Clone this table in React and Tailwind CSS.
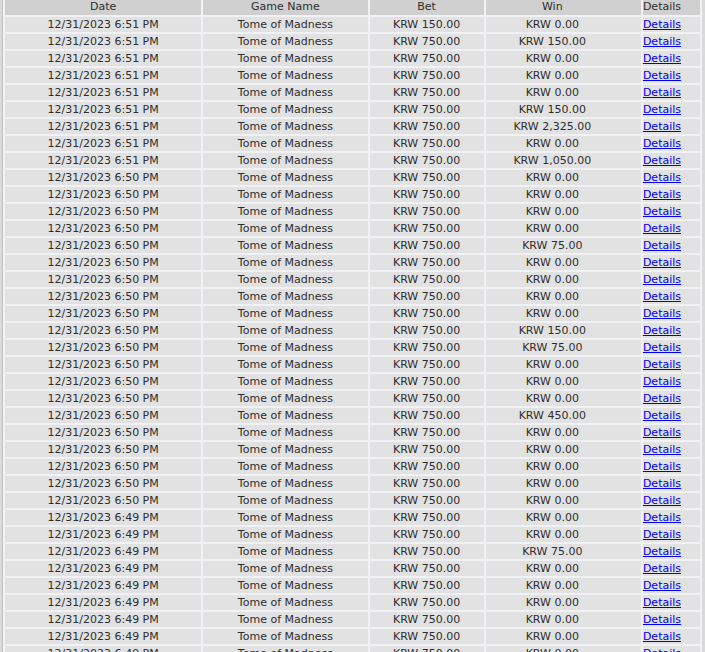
import React from 'react';

// history rows: [time, bet, win]
const rows = [
  ['6:51', '150.00', '0.00'],
  ['6:51', '750.00', '150.00'],
  ['6:51', '750.00', '0.00'],
  ['6:51', '750.00', '0.00'],
  ['6:51', '750.00', '0.00'],
  ['6:51', '750.00', '150.00'],
  ['6:51', '750.00', '2,325.00'],
  ['6:51', '750.00', '0.00'],
  ['6:51', '750.00', '1,050.00'],
  ['6:50', '750.00', '0.00'],
  ['6:50', '750.00', '0.00'],
  ['6:50', '750.00', '0.00'],
  ['6:50', '750.00', '0.00'],
  ['6:50', '750.00', '75.00'],
  ['6:50', '750.00', '0.00'],
  ['6:50', '750.00', '0.00'],
  ['6:50', '750.00', '0.00'],
  ['6:50', '750.00', '0.00'],
  ['6:50', '750.00', '150.00'],
  ['6:50', '750.00', '75.00'],
  ['6:50', '750.00', '0.00'],
  ['6:50', '750.00', '0.00'],
  ['6:50', '750.00', '0.00'],
  ['6:50', '750.00', '450.00'],
  ['6:50', '750.00', '0.00'],
  ['6:50', '750.00', '0.00'],
  ['6:50', '750.00', '0.00'],
  ['6:50', '750.00', '0.00'],
  ['6:50', '750.00', '0.00'],
  ['6:49', '750.00', '0.00'],
  ['6:49', '750.00', '0.00'],
  ['6:49', '750.00', '75.00'],
  ['6:49', '750.00', '0.00'],
  ['6:49', '750.00', '0.00'],
  ['6:49', '750.00', '0.00'],
  ['6:49', '750.00', '0.00'],
  ['6:49', '750.00', '0.00'],
  ['6:49', '750.00', '0.00'],
];

const cell = 'h-[15px] p-0 text-center leading-[15px] bg-[#e2e2e2] whitespace-nowrap';
const head = 'h-[17px] p-0 font-normal leading-[17px] bg-[#d0d0d0] text-[#2e2e2e]';

export default function App() {
  return (
    <div
      className="h-[652px] w-[705px] overflow-hidden bg-[#dadada] text-[11px] text-[#2e2e2e]"
      style={{ fontFamily: '"DejaVu Sans", Verdana, sans-serif' }}
    >
      <div className="ml-[2px] -mt-[4px] w-[700px] border-l border-[#c4c4c4] border-r">
        <table className="w-[699px] table-fixed border-separate border-spacing-[2px] bg-[#f1f2f5]">
          <colgroup>
            <col className="w-[196px]" />
            <col className="w-[164px]" />
            <col className="w-[114px]" />
            <col className="w-[155px]" />
            <col className="w-[57px]" />
          </colgroup>
          <thead>
            <tr>
              <th className={`${head} text-center`}>Date</th>
              <th className={`${head} text-center`}>Game Name</th>
              <th className={`${head} text-center`}>Bet</th>
              <th className={`${head} text-center pr-[22px]`}>Win</th>
              <th className={`${head} text-left`}>Details</th>
            </tr>
          </thead>
          <tbody>
            {rows.map(([t, bet, win], i) => (
              <tr key={i}>
                <td className={cell}>12/31/2023 {t} PM</td>
                <td className={cell}>Tome of Madness</td>
                <td className={cell}>KRW {bet}</td>
                <td className={`${cell} pr-[22px]`}>KRW {win}</td>
                <td className="h-[15px] p-0 text-left leading-[15px] bg-[#e2e2e2] whitespace-nowrap">
                  <a href="#" className="text-[#0000ee] underline">Details</a>
                </td>
              </tr>
            ))}
          </tbody>
        </table>
      </div>
    </div>
  );
}
